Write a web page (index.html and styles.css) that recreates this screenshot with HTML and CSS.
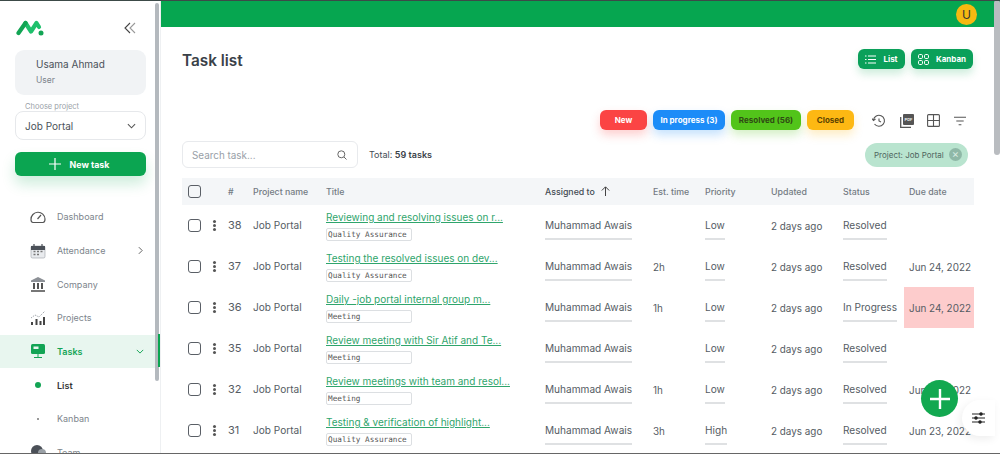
FILE: index.html
```html
<!DOCTYPE html>
<html lang="en">
<head>
    <meta charset="UTF-8">
    <meta name="viewport" content="width=device-width, initial-scale=1.0">
    <title>Task list</title>
    <link rel="stylesheet" href="styles.css">
</head>
<body>
    <aside class="sidebar">
        <div class="logo-row">
            <svg class="logo" width="28" height="16" viewBox="0 0 28 16" fill="none" stroke-linecap="round" stroke-linejoin="round" stroke-width="4.200">
                <path d="M9.500 3 L15 11.500 L20.500 3 L23 7" stroke="#1fc06c"/>
                <path d="M2.500 13 L9.500 3" stroke="#12a454"/>
                <circle cx="25" cy="13" r="2.500" fill="#12a454" stroke="none"/>
            </svg>
            <svg width="12" height="12" viewBox="0 0 12 12" fill="none" stroke-width="1.100">
                <path d="M6 1 L1 6 L6 11" stroke="#444"/>
                <path d="M11 1 L6 6 L11 11" stroke="#999"/>
            </svg>
        </div>
        <div class="user-card">
            <div class="user-name">Usama Ahmad</div>
            <div class="user-role">User</div>
        </div>
        <label class="project-label">Choose project</label>
        <div class="project-select">
            <span>Job Portal</span>
            <svg width="9" height="6" viewBox="0 0 10 6" fill="none" stroke="#555" stroke-width="1.200"><path d="M1 1 L5 5 L9 1"/></svg>
        </div>
        <button class="new-task">
            <svg width="12" height="12" viewBox="0 0 12 12" stroke="#fff" stroke-width="1.200"><path d="M6 0 V12 M0 6 H12"/></svg>
            <span>New task</span>
        </button>
        <nav class="nav">
            <a class="nav-item">
                <svg width="16" height="14" viewBox="0 0 16 14" fill="none" stroke="#555" stroke-width="1.200"><path d="M3 12.500 Q1 12.500 1 9.500 A7 7 0 0 1 15 9 Q15 12.500 13 12.500 Z"/><path d="M7.500 9 L11 5"/></svg>
                <span>Dashboard</span>
            </a>
            <a class="nav-item">
                <svg width="16" height="16" viewBox="0 0 16 16"><rect x="1" y="3" width="14" height="12" rx="1.500" fill="#e9ebee" stroke="#9aa0a6" stroke-width=".6"/><path d="M1 3 H15 V7 H1Z" fill="#4b5058"/><path d="M4 1 V4 M12 1 V4" stroke="#4b5058" stroke-width="1.200"/><path d="M3.500 8.500 H5.500 M7 8.500 H9 M10.500 8.500 H12.500 M3.500 11.500 H5.500 M7 11.500 H9" stroke="#777" stroke-width="1.300"/></svg>
                <span>Attendance</span>
                <svg class="nav-arrow" width="5" height="9" viewBox="0 0 6 10" fill="none" stroke="#555" stroke-width="1.100"><path d="M1 1 L5 5 L1 9"/></svg>
            </a>
            <a class="nav-item">
                <svg width="16" height="15" viewBox="0 0 16 15" fill="#555"><path d="M8 0 L15 3.500 V5 H1 V3.500Z" fill="#8c9096"/><path d="M3 6 H5 V12 H3Z M7 6 H9 V12 H7Z M11 6 H13 V12 H11Z"/><path d="M1 13 H15 V15 H1Z" fill="#777"/></svg>
                <span>Company</span>
            </a>
            <a class="nav-item">
                <svg width="16" height="15" viewBox="0 0 16 15"><path d="M1 8 L5 5 L9 7 L15 1" fill="none" stroke="#9aa0a6" stroke-width=".9" stroke-dasharray="1.500 1"/><path d="M1 12 H3 V15 H1Z M5.500 9 H7.500 V15 H5.500Z M9.500 11 H11.500 V15 H9.500Z M13 7 H15 V15 H13Z" fill="#444"/></svg>
                <span>Projects</span>
            </a>
            <a class="nav-item nav-active">
                <svg width="16" height="15" viewBox="0 0 16 15"><rect x="1" y="0" width="14" height="10" rx="1.500" fill="#12a454"/><rect x="3.500" y="2.500" width="5" height="2.500" fill="#e8f6ef"/><path d="M8 10 V13 M4 13.500 H12" stroke="#12a454" stroke-width="1"/></svg>
                <span>Tasks</span>
                <svg class="nav-arrow nav-arrow-down" width="8" height="5" viewBox="0 0 10 6" fill="none" stroke="#12a454" stroke-width="1.200"><path d="M1 1 L5 5 L9 1"/></svg>
            </a>
            <a class="nav-item nav-sub nav-current">
                <i class="dot dot-big"></i>
                <span>List</span>
            </a>
            <a class="nav-item nav-sub">
                <i class="dot"></i>
                <span>Kanban</span>
            </a>
            <a class="nav-item">
                <svg width="16" height="15" viewBox="0 0 16 15"><circle cx="7" cy="6" r="6" fill="#4b5058"/><circle cx="12" cy="8" r="4" fill="#9aa0a6"/></svg>
                <span>Team</span>
            </a>
        </nav>
        <div class="side-thumb"></div>
        <div class="active-bar"></div>
    </aside>

    <main class="main">
        <header class="topbar">
            <div class="avatar">U</div>
        </header>
        <div class="content">
            <div class="title-row">
                <h1>Task list</h1>
                <div class="view-buttons">
                    <button class="view-btn view-list">
                        <svg width="11" height="9" viewBox="0 0 11 9" stroke="#fff" stroke-width="1"><path d="M3 1 H11 M3 4.500 H11 M3 8 H11 M0 1 H1.500 M0 4.500 H1.500 M0 8 H1.500"/></svg>
                        List
                    </button>
                    <button class="view-btn view-kanban">
                        <svg width="11" height="11" viewBox="0 0 11 11" fill="none" stroke="#fff" stroke-width="1"><rect x=".5" y=".5" width="4" height="4" rx="1.200"/><rect x="6.500" y=".5" width="4" height="4" rx="1.200"/><rect x=".5" y="6.500" width="4" height="4" rx="1.200"/><rect x="6.500" y="6.500" width="4" height="4" rx="1.200"/></svg>
                        Kanban
                    </button>
                </div>
            </div>

            <div class="filter-row">
                <button class="status-btn s-new">New</button>
                <button class="status-btn s-progress">In progress (3)</button>
                <button class="status-btn s-resolved">Resolved (56)</button>
                <button class="status-btn s-closed">Closed</button>
                <div class="tool-icons">
                    <svg width="14" height="14" viewBox="0 0 14 14" fill="none" stroke="#555" stroke-width="1.100"><path d="M2.500 10 A5.500 5.500 0 1 0 1.500 6"/><path d="M0 4.500 L1.500 6.500 L3.500 5"/><path d="M7 4.500 V7 L9 8"/></svg>
                    <svg width="14" height="14" viewBox="0 0 14 14"><path d="M.7 3 V13.300 H11" fill="none" stroke="#555" stroke-width="1.300"/><rect x="3" y="0" width="11" height="11" rx="1" fill="#555"/><text x="8.500" y="7.300" class="pdf-text">PDF</text></svg>
                    <svg width="13" height="13" viewBox="0 0 13 13" fill="none" stroke="#555" stroke-width="1.100"><rect x=".6" y=".6" width="11.800" height="11.800" rx="1"/><path d="M6.500 .6 V12.400 M.6 6.500 H12.400"/></svg>
                    <svg width="12" height="10" viewBox="0 0 13 10" stroke="#555" stroke-width="1.100"><path d="M0 1 H13 M2.500 5 H10.500 M5 9 H8"/></svg>
                </div>
            </div>

            <div class="search-row">
                <div class="search">
                    <span>Search task...</span>
                    <svg width="10" height="10" viewBox="0 0 10 10" fill="none" stroke="#666" stroke-width="1"><circle cx="4.300" cy="4.300" r="3.500"/><path d="M7 7 L9.500 9.500"/></svg>
                </div>
                <div class="total">Total: <b>59 tasks</b></div>
                <div class="chip">
                    <span>Project: Job Portal</span>
                    <i class="chip-x">×</i>
                </div>
            </div>

            <table class="tasks">
                <colgroup>
                    <col class="c-check"><col class="c-num"><col class="c-proj"><col class="c-title"><col class="c-user"><col class="c-est"><col class="c-prio"><col class="c-upd"><col class="c-stat"><col class="c-due">
                </colgroup>
                <thead>
                    <tr>
                        <th><span class="check"></span></th>
                        <th>#</th>
                        <th>Project name</th>
                        <th>Title</th>
                        <th class="sorted">Assigned to
                            <svg width="9" height="10" viewBox="0 0 9 10" fill="none" stroke="#444" stroke-width="1"><path d="M4.500 10 V1 M.8 4.500 L4.500 .8 L8.200 4.500"/></svg>
                        </th>
                        <th>Est. time</th>
                        <th>Priority</th>
                        <th>Updated</th>
                        <th>Status</th>
                        <th class="due">Due date</th>
                    </tr>
                </thead>
                <tbody>
                    <tr>
                        <td><div class="row-tools"><span class="check"></span><i class="dots"></i></div></td>
                        <td class="num">38</td>
                        <td>Job Portal</td>
                        <td class="title-cell"><a class="task-link">Reviewing and resolving issues on r...</a><div class="tag">Quality Assurance</div></td>
                        <td><span class="lined">Muhammad Awais</span></td>
                        <td></td>
                        <td><span class="lined">Low</span></td>
                        <td class="upd">2 days ago</td>
                        <td><span class="lined">Resolved</span></td>
                        <td class="due"></td>
                    </tr>
                    <tr>
                        <td><div class="row-tools"><span class="check"></span><i class="dots"></i></div></td>
                        <td class="num">37</td>
                        <td>Job Portal</td>
                        <td class="title-cell"><a class="task-link">Testing the resolved issues on dev...</a><div class="tag">Quality Assurance</div></td>
                        <td><span class="lined">Muhammad Awais</span></td>
                        <td class="upd">2h</td>
                        <td><span class="lined">Low</span></td>
                        <td class="upd">2 days ago</td>
                        <td><span class="lined">Resolved</span></td>
                        <td class="due upd">Jun 24, 2022</td>
                    </tr>
                    <tr>
                        <td><div class="row-tools"><span class="check"></span><i class="dots"></i></div></td>
                        <td class="num">36</td>
                        <td>Job Portal</td>
                        <td class="title-cell"><a class="task-link">Daily -job portal internal group m...</a><div class="tag">Meeting</div></td>
                        <td><span class="lined">Muhammad Awais</span></td>
                        <td class="upd">1h</td>
                        <td><span class="lined">Low</span></td>
                        <td class="upd">2 days ago</td>
                        <td><span class="lined">In Progress</span></td>
                        <td class="due upd overdue">Jun 24, 2022</td>
                    </tr>
                    <tr>
                        <td><div class="row-tools"><span class="check"></span><i class="dots"></i></div></td>
                        <td class="num">35</td>
                        <td>Job Portal</td>
                        <td class="title-cell"><a class="task-link">Review meeting with Sir Atif and Te...</a><div class="tag">Meeting</div></td>
                        <td><span class="lined">Muhammad Awais</span></td>
                        <td></td>
                        <td><span class="lined">Low</span></td>
                        <td class="upd">2 days ago</td>
                        <td><span class="lined">Resolved</span></td>
                        <td class="due"></td>
                    </tr>
                    <tr>
                        <td><div class="row-tools"><span class="check"></span><i class="dots"></i></div></td>
                        <td class="num">32</td>
                        <td>Job Portal</td>
                        <td class="title-cell"><a class="task-link">Review meetings with team and resol...</a><div class="tag">Meeting</div></td>
                        <td><span class="lined">Muhammad Awais</span></td>
                        <td class="upd">1h</td>
                        <td><span class="lined">Low</span></td>
                        <td class="upd">2 days ago</td>
                        <td><span class="lined">Resolved</span></td>
                        <td class="due upd">Jun 24, 2022</td>
                    </tr>
                    <tr>
                        <td><div class="row-tools"><span class="check"></span><i class="dots"></i></div></td>
                        <td class="num">31</td>
                        <td>Job Portal</td>
                        <td class="title-cell"><a class="task-link">Testing &amp; verification of highlight...</a><div class="tag">Quality Assurance</div></td>
                        <td><span class="lined">Muhammad Awais</span></td>
                        <td class="upd">3h</td>
                        <td><span class="lined">High</span></td>
                        <td class="upd">2 days ago</td>
                        <td><span class="lined">Resolved</span></td>
                        <td class="due upd">Jun 23, 2022</td>
                    </tr>
                </tbody>
            </table>
        </div>
        <div class="page-thumb"></div>
        <button class="fab">
            <svg width="20" height="20" viewBox="0 0 20 20" stroke="#fff" stroke-width="2.400"><path d="M10 0 V20 M0 10 H20"/></svg>
        </button>
        <div class="settings">
            <svg width="13" height="12" viewBox="0 0 13 12" stroke="#222" stroke-width="1.100" fill="#222"><path d="M0 2 H13 M0 6 H13 M0 10 H13"/><circle cx="9" cy="2" r="1.200"/><circle cx="4" cy="6" r="1.200"/><circle cx="8" cy="10" r="1.200"/></svg>
        </div>
    </main>
    <div class="frame-top"></div>
    <div class="frame-bottom"></div>
</body>
</html>
```

FILE: styles.css
```css
* {
    box-sizing: border-box;
}
html, body {
    height: 100%;
}
body {
    margin: 0;
    display: flex;
    overflow: hidden;
    font-family: 'Inter', 'Roboto', sans-serif;
    color: #444c54;
    background-color: #fff;
}
button {
    font-family: inherit;
    border: none;
    cursor: pointer;
}
.frame-top, .frame-bottom {
    position: absolute;
    left: 0;
    right: 0;
    height: 1px;
    background-color: #3c4a48;
}
.frame-top {
    top: 0;
}
.frame-bottom {
    bottom: 0;
    background-color: #666;
}

/* sidebar */
.sidebar {
    position: relative;
    width: 161px;
    flex-shrink: 0;
    padding: 20px 0 0;
    border-right: 1px solid #eef0f2;
    overflow: hidden;
}
.logo-row {
    display: flex;
    justify-content: space-between;
    align-items: flex-start;
    padding: 0 24px 0 16px;
}
.logo-row svg:last-child {
    margin-top: 2px;
}
.user-card {
    margin: 14px 15px 0;
    width: 131px;
    height: 45px;
    padding: 7px 21px;
    background-color: #f1f3f5;
    border-radius: 9px;
}
.user-name {
    font-size: 10px;
    line-height: 15px;
    color: #4a5159;
}
.user-role {
    font-size: 8.500px;
    line-height: 14px;
    margin-top: 1px;
    color: #7d858c;
}
.project-label {
    display: block;
    margin: 7px 0 0 25px;
    font-size: 7.500px;
    line-height: 9px;
    color: #9aa1a8;
}
.project-select {
    display: flex;
    justify-content: space-between;
    align-items: center;
    margin: 0 15px;
    width: 131px;
    height: 29px;
    padding: 0 9px 0 9px;
    font-size: 10px;
    color: #4a5159;
    border: 1px solid #e6e8eb;
    border-radius: 8px;
}
.new-task {
    display: flex;
    justify-content: center;
    align-items: center;
    gap: 9px;
    margin: 12px 15px 0;
    width: 131px;
    height: 24px;
    padding: 0 3px 0 0;
    font-size: 8.800px;
    font-weight: 700;
    color: #fff;
    background-color: #0ba551;
    border-radius: 6px;
    box-shadow: 0 8px 14px rgba(11, 165, 81, 0.2);
}
.nav {
    margin-top: 24px;
    width: 155px;
}
.nav-item {
    display: flex;
    align-items: center;
    height: 33.700px;
    padding: 0 12px 0 30px;
    font-size: 9px;
    color: #7d858c;
}
.nav-item svg:first-child {
    flex-shrink: 0;
}
.nav-item span {
    margin-left: 11px;
}
.nav-arrow {
    margin-left: auto;
}
.nav-active {
    background-color: #e8f6ef;
    color: #12a454;
    font-weight: 600;
}
.nav-arrow-down {
    margin-right: -1px;
}
.nav-sub {
    padding-left: 35px;
}
.nav-current {
    color: #333;
    font-weight: 600;
}
.dot {
    display: block;
    width: 2px;
    height: 2px;
    margin: 0 2px;
    border-radius: 50%;
    background-color: #777;
}
.dot-big {
    width: 6px;
    height: 6px;
    margin: 0;
    background-color: #12a454;
}
.nav-sub .dot + span {
    margin-left: 16px;
}
.side-thumb {
    position: absolute;
    top: 3px;
    left: 155px;
    width: 4px;
    height: 378px;
    background-color: #b4b9be;
    border-radius: 2px;
}
.active-bar {
    position: absolute;
    top: 334px;
    left: 158px;
    width: 2px;
    height: 33px;
    background-color: #0ba551;
}

/* main area */
.main {
    position: relative;
    flex: 1;
    min-width: 0;
    overflow: hidden;
}
.topbar {
    display: flex;
    justify-content: flex-end;
    align-items: center;
    height: 27px;
    padding: 1px 23px 0 0;
    background-color: #06a650;
}
.avatar {
    width: 21px;
    height: 21px;
    border-radius: 50%;
    background-color: #f6b911;
    color: #333;
    font-size: 12px;
    line-height: 21px;
    text-align: center;
}
.content {
    padding: 0 26px 0 21px;
}
.title-row {
    display: flex;
    justify-content: space-between;
    align-items: center;
    height: 20px;
    margin-top: 22px;
}
h1 {
    margin: 2px 0 0;
    font-size: 15.300px;
    font-weight: 600;
    color: #3a4148;
}
.view-buttons {
    display: flex;
    gap: 6px;
    margin-right: 1px;
}
.view-btn {
    display: flex;
    align-items: center;
    justify-content: center;
    gap: 7px;
    height: 20px;
    padding: 0;
    font-size: 8px;
    font-weight: 700;
    color: #fff;
    background-color: #0ba05a;
    border-radius: 6px;
    box-shadow: 0 5px 9px rgba(11, 165, 81, 0.2);
}
.view-list {
    width: 47px;
}
.view-kanban {
    width: 62px;
}
.filter-row {
    display: flex;
    align-items: center;
    margin-top: 41px;
    height: 20px;
    padding-left: 418px;
}
.status-btn {
    height: 20px;
    padding: 0;
    margin-right: 6px;
    font-size: 8px;
    font-weight: 700;
    border-radius: 6px;
}
.s-new {
    width: 47px;
    color: #fff;
    background-color: #fb4444;
    box-shadow: 0 5px 10px rgba(251, 68, 68, 0.25);
}
.s-progress {
    width: 72px;
    color: #fff;
    background-color: #1c8cf8;
    box-shadow: 0 5px 10px rgba(28, 140, 248, 0.25);
}
.s-resolved {
    width: 70px;
    color: #2f4a14;
    background-color: #52c41a;
    box-shadow: 0 5px 10px rgba(82, 196, 26, 0.25);
}
.s-closed {
    width: 47px;
    margin-right: 0;
    color: #5c4300;
    background-color: #fdb813;
    box-shadow: 0 5px 10px rgba(253, 184, 19, 0.25);
}
.tool-icons {
    display: flex;
    align-items: center;
    gap: 13.500px;
    margin: 1px 0 0 18px;
}
.pdf-text {
    font-size: 4px;
    font-weight: 700;
    fill: #eee;
    text-anchor: middle;
}
.search-row {
    display: flex;
    align-items: center;
    height: 27px;
    margin-top: 11px;
}
.search {
    display: flex;
    justify-content: space-between;
    align-items: center;
    width: 176px;
    height: 27px;
    padding: 0 10px 0 9px;
    font-size: 9.900px;
    color: #98a0a7;
    border: 1px solid #e8eaed;
    border-radius: 6px;
}
.total {
    margin-left: 11px;
    font-size: 9px;
}
.total b {
    font-weight: 600;
    color: #3a4148;
}
.chip {
    display: flex;
    align-items: center;
    justify-content: space-between;
    width: 103px;
    height: 24px;
    margin-left: auto;
    margin-right: 6px;
    padding: 0 6px 0 9px;
    font-size: 8px;
    color: #4f6660;
    background-color: #b9e4cf;
    border-radius: 12px;
}
.chip-x {
    width: 13px;
    height: 13px;
    border-radius: 50%;
    background-color: #8fb8a7;
    color: #d7ebe1;
    font-size: 11px;
    font-style: normal;
    line-height: 13px;
    text-align: center;
}

/* task table */
.tasks {
    width: 792px;
    margin-top: 10px;
    border-collapse: collapse;
    table-layout: fixed;
}
.c-check { width: 46px; }
.c-num { width: 25px; }
.c-proj { width: 73px; }
.c-title { width: 219px; }
.c-user { width: 108px; }
.c-est { width: 52px; }
.c-prio { width: 66px; }
.c-upd { width: 72px; }
.c-stat { width: 61px; }
.c-due { width: 70px; }
.tasks th {
    height: 27px;
    padding: 0;
    text-align: left;
    font-size: 8.800px;
    font-weight: 500;
    color: #737b83;
    background-color: #f4f6f8;
}
.tasks th:first-child {
    padding-left: 6px;
}
.tasks th .check {
    display: block;
}
.tasks th.sorted {
    color: #444c54;
}
.sorted svg {
    margin-left: 4px;
    vertical-align: -1px;
}
.tasks td {
    height: 41px;
    padding: 13px 0 0;
    vertical-align: top;
    font-size: 10.100px;
    line-height: 14px;
    color: #555c64;
    white-space: nowrap;
}
.tasks td.due, .tasks th.due {
    padding-left: 5px;
}
.tasks td.num {
    font-size: 11px;
}
.tasks td.upd {
    padding-top: 14px;
    font-size: 9.900px;
}
.tasks td.title-cell {
    padding-top: 5px;
}
.row-tools {
    display: flex;
    align-items: center;
    padding: 1px 0 0 6px;
}
.check {
    display: inline-block;
    width: 13px;
    height: 13px;
    border: 1.500px solid #5a5f66;
    border-radius: 3px;
}
.dots {
    display: block;
    width: 3px;
    height: 3px;
    margin-left: 12px;
    border-radius: 50%;
    background-color: #555;
    box-shadow: 0 -4px 0 #555, 0 4px 0 #555;
}
.task-link {
    display: block;
    font-size: 10px;
    line-height: 14px;
    color: #2fa56c;
    text-decoration: underline;
    white-space: nowrap;
}
.tag {
    width: 86px;
    height: 13px;
    margin-top: 4px;
    padding-left: 1px;
    font-family: 'DejaVu Sans Mono', monospace;
    font-size: 7.700px;
    line-height: 11px;
    color: #555;
    border: 1px solid #dcdfe2;
    border-radius: 2px;
    white-space: nowrap;
}
.lined {
    display: inline-block;
    padding-bottom: 6px;
    border-bottom: 2px solid #dfe1e3;
}
.overdue {
    background-color: #fdcccc;
}
.page-thumb {
    position: absolute;
    top: 0;
    right: 0;
    width: 6px;
    height: 155px;
    background-color: #b9bcc0;
    border-radius: 3px;
}
.fab {
    position: absolute;
    left: 760px;
    top: 380px;
    display: flex;
    align-items: center;
    justify-content: center;
    width: 37px;
    height: 37px;
    padding: 0;
    background-color: #12a850;
    border-radius: 50%;
}
.settings {
    position: absolute;
    left: 801px;
    top: 400px;
    display: flex;
    align-items: center;
    justify-content: center;
    width: 33px;
    height: 36px;
    background-color: #fff;
    border-radius: 18px 0 0 18px;
    box-shadow: -2px 3px 8px rgba(0, 0, 0, 0.07);
}
```
